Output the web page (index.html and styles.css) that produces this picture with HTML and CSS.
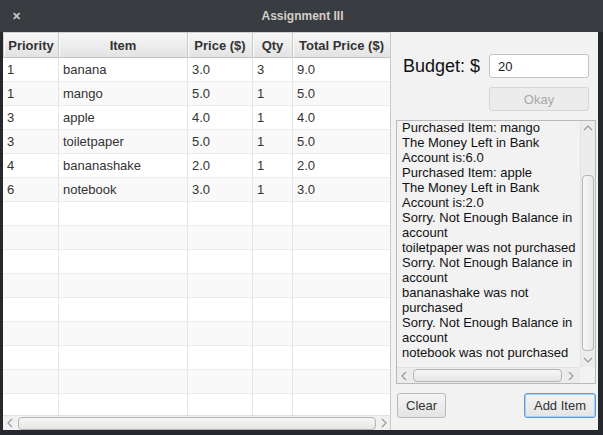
FILE: index.html
```html
<!DOCTYPE html>
<html>
<head>
<meta charset="utf-8">
<link rel="stylesheet" href="styles.css">
</head>
<body>
<div class="titlebar">
  <span class="close">✕</span>
  <span class="title">Assignment III</span>
</div>
<div class="window">
  <div class="table-pane">
    <div class="thead">
      <div class="th">Priority</div>
      <div class="th">Item</div>
      <div class="th">Price ($)</div>
      <div class="th">Qty</div>
      <div class="th">Total Price ($)</div>
    </div>
    <div class="tbody">
      <div class="tr"><div class="td">1</div><div class="td">banana</div><div class="td">3.0</div><div class="td">3</div><div class="td">9.0</div></div>
      <div class="tr"><div class="td">1</div><div class="td">mango</div><div class="td">5.0</div><div class="td">1</div><div class="td">5.0</div></div>
      <div class="tr"><div class="td">3</div><div class="td">apple</div><div class="td">4.0</div><div class="td">1</div><div class="td">4.0</div></div>
      <div class="tr"><div class="td">3</div><div class="td">toiletpaper</div><div class="td">5.0</div><div class="td">1</div><div class="td">5.0</div></div>
      <div class="tr"><div class="td">4</div><div class="td">bananashake</div><div class="td">2.0</div><div class="td">1</div><div class="td">2.0</div></div>
      <div class="tr"><div class="td">6</div><div class="td">notebook</div><div class="td">3.0</div><div class="td">1</div><div class="td">3.0</div></div>
      <div class="tr"><div class="td"></div><div class="td"></div><div class="td"></div><div class="td"></div><div class="td"></div></div>
      <div class="tr"><div class="td"></div><div class="td"></div><div class="td"></div><div class="td"></div><div class="td"></div></div>
      <div class="tr"><div class="td"></div><div class="td"></div><div class="td"></div><div class="td"></div><div class="td"></div></div>
      <div class="tr"><div class="td"></div><div class="td"></div><div class="td"></div><div class="td"></div><div class="td"></div></div>
      <div class="tr"><div class="td"></div><div class="td"></div><div class="td"></div><div class="td"></div><div class="td"></div></div>
      <div class="tr"><div class="td"></div><div class="td"></div><div class="td"></div><div class="td"></div><div class="td"></div></div>
      <div class="tr"><div class="td"></div><div class="td"></div><div class="td"></div><div class="td"></div><div class="td"></div></div>
      <div class="tr"><div class="td"></div><div class="td"></div><div class="td"></div><div class="td"></div><div class="td"></div></div>
      <div class="tr"><div class="td"></div><div class="td"></div><div class="td"></div><div class="td"></div><div class="td"></div></div>
      <div class="tr"><div class="td"></div><div class="td"></div><div class="td"></div><div class="td"></div><div class="td"></div></div>
    </div>
    <div class="hscroll table-hscroll">
      <svg class="arrow" width="8" height="10" viewBox="0 0 8 10"><polyline points="6,1 2,5 6,9" fill="none" stroke="#9a9a9a" stroke-width="1.2"/></svg>
      <div class="thumb"></div>
      <svg class="arrow" width="8" height="10" viewBox="0 0 8 10"><polyline points="2,1 6,5 2,9" fill="none" stroke="#9a9a9a" stroke-width="1.2"/></svg>
    </div>
  </div>
  <div class="side">
    <div class="budget-row">
      <span class="budget-label">Budget: $</span>
      <div class="input">20</div>
    </div>
    <div class="okay-row"><div class="btn disabled okay">Okay</div></div>
    <div class="textarea">
      <div class="ta-main">
        <div class="ta-content">
          <div class="ta-text">Purchased Item: mango<br>The Money Left in Bank<br>Account is:6.0<br>Purchased Item: apple<br>The Money Left in Bank<br>Account is:2.0<br>Sorry. Not Enough Balance in<br>account<br>toiletpaper was not purchased<br>Sorry. Not Enough Balance in<br>account<br>bananashake was not<br>purchased<br>Sorry. Not Enough Balance in<br>account<br>notebook was not purchased</div>
        </div>
        <div class="vscroll">
          <svg class="varrow" width="10" height="8" viewBox="0 0 10 8"><polyline points="1,6 5,2 9,6" fill="none" stroke="#9a9a9a" stroke-width="1.2"/></svg>
          <div class="vtrack"><div class="vthumb"></div></div>
          <svg class="varrow" width="10" height="8" viewBox="0 0 10 8"><polyline points="1,2 5,6 9,2" fill="none" stroke="#9a9a9a" stroke-width="1.2"/></svg>
        </div>
      </div>
      <div class="ta-bottom">
        <div class="hscroll ta-hscroll">
          <svg class="arrow" width="8" height="10" viewBox="0 0 8 10"><polyline points="6,1 2,5 6,9" fill="none" stroke="#9a9a9a" stroke-width="1.2"/></svg>
          <div class="thumb"></div>
          <svg class="arrow" width="8" height="10" viewBox="0 0 8 10"><polyline points="2,1 6,5 2,9" fill="none" stroke="#9a9a9a" stroke-width="1.2"/></svg>
        </div>
        <div class="corner"></div>
      </div>
    </div>
    <div class="button-row">
      <div class="btn">Clear</div>
      <div class="btn focused">Add Item</div>
    </div>
  </div>
</div>
</body>
</html>
```
FILE: styles.css
```css
* { box-sizing: border-box; }
html, body { margin: 0; padding: 0; }
body {
  width: 603px;
  height: 435px;
  background: #25282d;
  font-family: "Liberation Sans", Arial, sans-serif;
  color: #333;
  overflow: hidden;
}
.titlebar {
  height: 32px;
  background: #393c41;
  display: flex;
  align-items: center;
  position: relative;
}
.close {
  font-size: 11px;
  font-weight: bold;
  color: #c9c9c9;
  margin-left: 12px;
  width: 12px;
}
.title {
  flex: 1;
  text-align: center;
  font-size: 12px;
  font-weight: bold;
  color: #d3cfc7;
  margin-right: 24px;
  padding-left: 2px;
}
.window {
  display: flex;
  margin-left: 3px;
  width: 595px;
  height: 398px;
  background: #f2f2f2;
}
.table-pane {
  width: 388px;
  height: 398px;
  display: flex;
  flex-direction: column;
  background: #fff;
  overflow: hidden;
  position: relative;
}
.thead, .tr {
  display: grid;
  grid-template-columns: 56px 129px 65px 40px 98px;
}
.thead {
  height: 26px;
  flex: none;
}
.th {
  background: linear-gradient(#f7f7f7, #e3e3e3);
  border-right: 1px solid #c8c8c8;
  border-bottom: 1px solid #c3c3c3;
  border-top: 1px solid #d0d0d0;
  box-shadow: inset 1px 0 0 #fbfbfb;
  font-size: 13px;
  font-weight: bold;
  color: #333;
  display: flex;
  align-items: center;
  justify-content: center;
}
.th:first-child { border-left: 1px solid #d0d0d0; }
.tbody {
  flex: 1;
  overflow: hidden;
}
.tr { height: 24px; }
.tr:nth-child(even) .td { background: #f9f9f9; }
.td {
  background: #fff;
  border-right: 1px solid #e6e6e6;
  border-bottom: 1px solid #ececec;
  font-size: 13px;
  color: #333;
  padding-left: 4px;
  display: flex;
  align-items: center;
}
.td:last-child { border-right: 1px solid #c8c8c8; }
.hscroll {
  display: flex;
  align-items: center;
  background: #f0f0f0;
}
.table-hscroll {
  position: absolute;
  left: 0;
  right: 0;
  bottom: 0;
  height: 15px;
  border-top: 1px solid #e0e0e0;
  border-right: 1px solid #c8c8c8;
  padding: 0 2px 0 3px;
  gap: 4px;
}
.thumb {
  flex: 1;
  height: 13px;
  border: 1px solid #b4b4b4;
  border-radius: 4px;
  background: linear-gradient(#f6f6f6, #e6e6e6);
}
.arrow { flex: none; }
.side {
  flex: 1;
  padding: 22px 0 0 5px;
  display: flex;
  flex-direction: column;
}
.budget-row {
  display: flex;
  align-items: center;
  height: 24px;
  padding-left: 7px;
}
.budget-label {
  font-size: 18px;
  color: #111;
  flex: 1;
}
.input {
  width: 100px;
  height: 24px;
  margin-right: 9px;
  background: #fff;
  border: 1px solid #c4c4c4;
  border-radius: 3px;
  font-size: 13px;
  color: #222;
  padding-left: 8px;
  display: flex;
  align-items: center;
}
.okay-row {
  display: flex;
  justify-content: flex-end;
  margin-top: 9px;
  padding-right: 9px;
}
.btn {
  height: 25px;
  border: 1px solid #b9b9b9;
  border-radius: 3px;
  background: linear-gradient(#f4f4f4, #e4e4e4);
  font-size: 13px;
  color: #333;
  display: flex;
  align-items: center;
  justify-content: center;
  padding: 0 8px;
}
.okay {
  width: 100px;
  height: 24px;
}
.btn.disabled {
  background: #ececec;
  border-color: #d6d6d6;
  color: #a9a9a9;
}
.btn.focused {
  border: 1px solid #5e9ed6;
  box-shadow: inset 0 0 0 1px #a9cdee;
  padding: 0 9px;
}
.textarea {
  margin-top: 9px;
  width: 200px;
  height: 264px;
  border: 1px solid #b9b9b9;
  display: flex;
  flex-direction: column;
  background: #f2f2f2;
}
.ta-main {
  flex: 1;
  display: flex;
  min-height: 0;
}
.ta-content {
  flex: 1;
  overflow: hidden;
  padding-left: 5px;
}
.ta-text {
  margin-top: -1px;
  font-size: 13px;
  line-height: 15px;
  color: #111;
  white-space: nowrap;
}
.vscroll {
  width: 15px;
  display: flex;
  flex-direction: column;
  align-items: center;
  background: #ececec;
  border-left: 1px solid #e2e2e2;
}
.varrow { flex: none; margin: 3px 0; }
.vtrack {
  flex: 1;
  width: 100%;
  padding-top: 40px;
  padding-bottom: 2px;
  display: flex;
  justify-content: center;
}
.vthumb {
  width: 12px;
  height: 100%;
  border: 1px solid #b4b4b4;
  border-radius: 4px;
  background: linear-gradient(90deg, #f8f8f8, #e8e8e8);
}
.ta-bottom {
  height: 16px;
  display: flex;
}
.ta-hscroll {
  flex: 1;
  height: 16px;
  padding: 0 5px 0 3px;
  gap: 5px;
  background: #ececec;
  border-top: 1px solid #e2e2e2;
}
.ta-hscroll .thumb { height: 13px; }
.corner {
  width: 15px;
  background: #f2f2f2;
}
.button-row {
  display: flex;
  justify-content: space-between;
  margin-top: 9px;
  width: 200px;
  padding-left: 1px;
}
.button-row .btn { height: 25px; }
```
